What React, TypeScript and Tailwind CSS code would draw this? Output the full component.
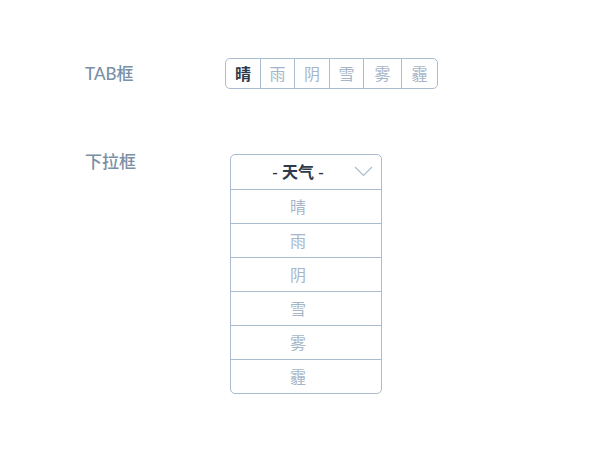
import React from 'react';

const tabs = [
  { label: '晴', w: 'w-[34px]' },
  { label: '雨', w: 'w-[34px]' },
  { label: '阴', w: 'w-[35px]' },
  { label: '雪', w: 'w-[34px]' },
  { label: '雾', w: 'w-[38px]' },
  { label: '霾', w: 'w-[36px]' },
];

const options = ['晴', '雨', '阴', '雪', '雾', '霾'];

const App: React.FC = () => {
  return (
    <div
      className="w-[597px] h-[450px] bg-white pt-[58px] pl-[85px]"
      style={{ fontFamily: 'Lato, "Noto Sans CJK SC", sans-serif' }}
    >
      {/* TAB box */}
      <div className="flex items-center">
        <div className="w-[140px] text-[17px] leading-5 font-medium text-[#7b8fa5]">TAB框</div>
        <div className="flex h-[31px] border border-[#a9bcd0] rounded-[5px] overflow-hidden">
          {tabs.map((t, i) => (
            <div
              key={t.label}
              className={`${t.w} flex items-center justify-center text-[16px] ${
                i > 0 ? 'border-l border-[#a9bcd0]' : ''
              } ${i === 0 ? 'text-[#2c3a4a] font-semibold' : 'text-[#a6b6c8]'}`}
            >
              {t.label}
            </div>
          ))}
        </div>
      </div>

      {/* Dropdown */}
      <div className="flex items-start mt-[63px]">
        <div className="w-[145px] text-[17px] leading-5 font-medium text-[#7b8fa5]">下拉框</div>
        <div className="mt-[2px] w-[152px] border border-[#a9bcd0] rounded-[5px] overflow-hidden">
          <div className="relative h-[34px] pr-[16px] flex items-center justify-center text-[16px] font-semibold text-[#2c3a4a]">
            - 天气 -
            <svg
              className="absolute right-[8px] top-[11px]"
              width="19"
              height="11"
              viewBox="0 0 19 11"
              fill="none"
            >
              <path d="M1 1 L9.5 9.5 L18 1" stroke="#a9bcd0" strokeWidth="1.2" />
            </svg>
          </div>
          {options.map((o) => (
            <div
              key={o}
              className="h-[34px] pr-[16px] border-t border-[#a9bcd0] flex items-center justify-center text-[16px] text-[#a6b6c8]"
            >
              {o}
            </div>
          ))}
        </div>
      </div>
    </div>
  );
};

export default App;
